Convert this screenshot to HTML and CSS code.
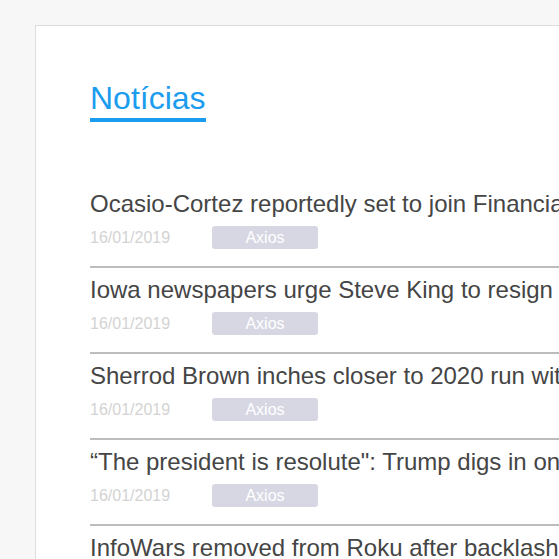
FILE: index.html
```html
<!DOCTYPE html>
<html lang="pt">
<head>
<meta charset="utf-8">
<title>Notícias</title>
<link rel="stylesheet" href="styles.css">
</head>
<body>
<main class="card">
  <h1 class="heading">Notícias</h1>
  <ul class="news">
    <li class="item">
      <div class="title">Ocasio-Cortez reportedly set to join Financial Services Committee</div>
      <div class="meta"><span class="date">16/01/2019</span><span class="source">Axios</span></div>
    </li>
    <li class="item">
      <div class="title">Iowa newspapers urge Steve King to resign</div>
      <div class="meta"><span class="date">16/01/2019</span><span class="source">Axios</span></div>
    </li>
    <li class="item">
      <div class="title">Sherrod Brown inches closer to 2020 run with Ohio tour</div>
      <div class="meta"><span class="date">16/01/2019</span><span class="source">Axios</span></div>
    </li>
    <li class="item">
      <div class="title">“The president is resolute": Trump digs in on border wall</div>
      <div class="meta"><span class="date">16/01/2019</span><span class="source">Axios</span></div>
    </li>
    <li class="item">
      <div class="title">InfoWars removed from Roku after backlash</div>
      <div class="meta"><span class="date">16/01/2019</span><span class="source">Axios</span></div>
    </li>
  </ul>
</main>
</body>
</html>
```
FILE: styles.css
```css
html, body {
  margin: 0;
  padding: 0;
  overflow: hidden;
  background: #f7f7f7;
  font-family: "Liberation Sans", Arial, sans-serif;
}

.card {
  margin: 25px 0 0 35px;
  width: 1000px;
  min-height: 700px;
  background: #ffffff;
  border: 1px solid #dddddd;
  padding: 54px 0 0 54px;
  box-sizing: border-box;
}

.heading {
  display: inline-block;
  margin: 0;
  font-size: 32px;
  line-height: 36px;
  font-weight: normal;
  color: #1b9cee;
  padding-bottom: 2px;
  border-bottom: 4px solid #1b9cee;
}

.news {
  list-style: none;
  margin: 60px 0 0 0;
  padding: 0;
}

.item {
  padding: 8px 0 17px 0;
  border-bottom: 2px solid #bdbdbd;
}

.title {
  font-size: 24px;
  line-height: 28px;
  color: #454545;
  white-space: nowrap;
}

.meta {
  display: flex;
  align-items: center;
  margin-top: 8px;
  height: 23px;
}

.date {
  width: 122px;
  font-size: 16px;
  color: #d3d3d3;
}

.source {
  width: 106px;
  height: 23px;
  line-height: 23px;
  text-align: center;
  font-size: 16px;
  color: #ffffff;
  background: #d7d7e3;
  border-radius: 3px;
}
```
